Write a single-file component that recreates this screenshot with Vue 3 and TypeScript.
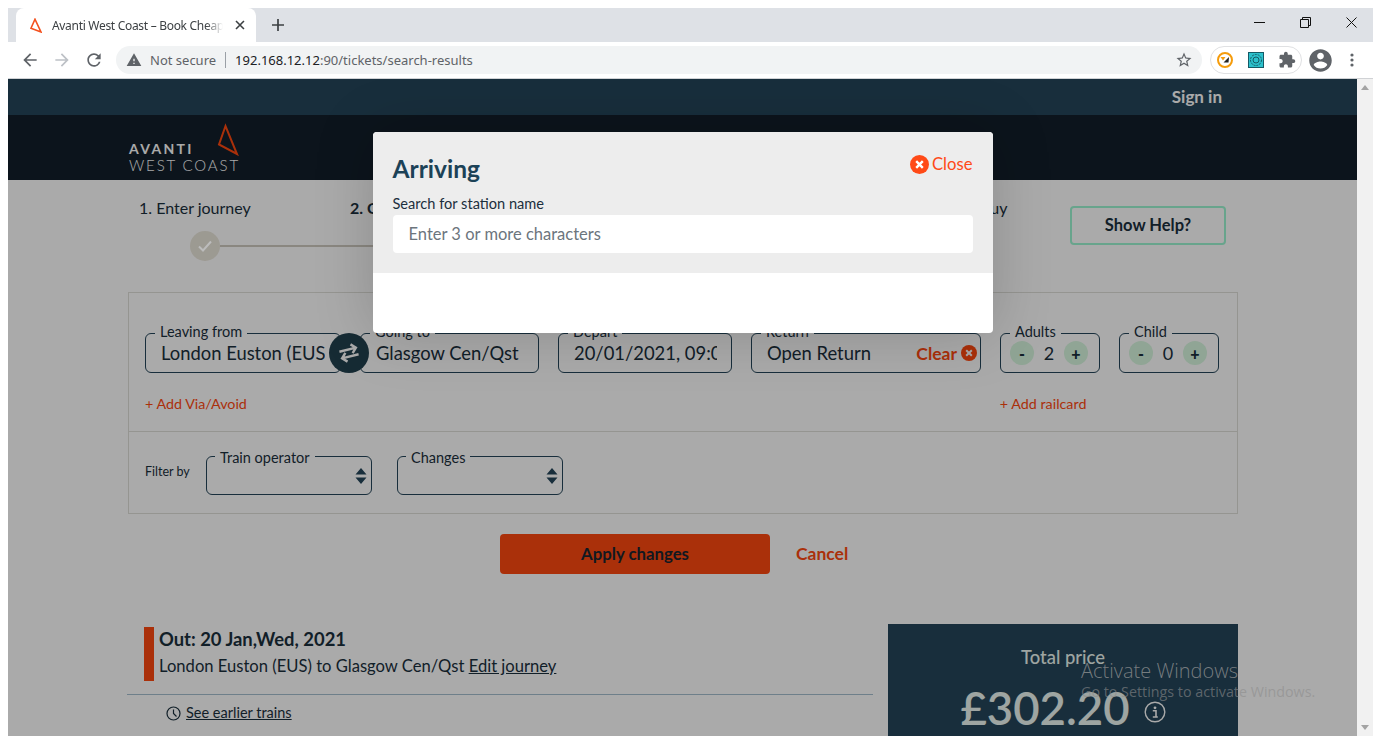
<template>
  <div class="screen">
    <!-- browser chrome -->
    <div class="tabstrip">
      <div class="tab">
        <svg class="favicon" width="12" height="15" viewBox="0 0 12 15"><path d="M5 1.2 1 10.2 11 14z" fill="none" stroke="#f4511e" stroke-width="1.6" /></svg>
        <span class="tab-title">Avanti West Coast – Book Cheap Train Tickets</span>
        <svg width="10" height="10" viewBox="0 0 10 10"><path d="M1 1l8 8M9 1L1 9" stroke="#3c4043" stroke-width="1.6" /></svg>
      </div>
      <svg class="newtab" width="12" height="12" viewBox="0 0 12 12"><path d="M6 0v12M0 6h12" stroke="#3c4043" stroke-width="1.7" /></svg>
      <div class="winctl">
        <svg width="11" height="11" viewBox="0 0 11 11"><path d="M0 5.5h11" stroke="#111" /></svg>
        <svg width="11" height="11" viewBox="0 0 11 11"><path d="M.5 2.5h8v8h-8zM2.5 2.5v-2h8v8h-2" fill="none" stroke="#111" /></svg>
        <svg width="11" height="11" viewBox="0 0 11 11"><path d="M.5.5l10 10M10.500 .5l-10 10" stroke="#111" /></svg>
      </div>
    </div>
    <div class="toolbar">
      <svg class="nav" width="20" height="20" viewBox="0 0 24 24"><path fill="#5f6368" d="M20 11H7.83l5.59-5.59L12 4l-8 8 8 8 1.41-1.41L7.83 13H20v-2z" /></svg>
      <svg class="nav" width="20" height="20" viewBox="0 0 24 24"><path fill="#bdc1c6" d="M4 11h12.17l-5.59-5.59L12 4l8 8-8 8-1.41-1.41L16.170 13H4v-2z" /></svg>
      <svg class="nav" width="20" height="20" viewBox="0 0 24 24"><path fill="#5f6368" d="M17.65 6.35A7.958 7.958 0 0 0 12 4c-4.42 0-7.99 3.58-7.99 8s3.57 8 7.99 8c3.73 0 6.84-2.55 7.73-6h-2.08A5.99 5.99 0 0 1 12 18c-3.31 0-6-2.69-6-6s2.69-6 6-6c1.66 0 3.14.69 4.22 1.78L13 11h7V4l-2.35 2.350z" /></svg>
      <div class="omnibox">
        <svg width="16" height="16" viewBox="0 0 24 24"><path fill="#5f6368" d="M1 21h22L12 2 1 21zm12-3h-2v-2h2v2zm0-4h-2v-4h2v4z" /></svg>
        <span class="insecure">Not secure</span>
        <span class="url"><b>192.168.12.12</b>:90/tickets/search-results</span>
        <svg class="star" width="18" height="18" viewBox="0 0 24 24"><path fill="#5f6368" d="M22 9.240l-7.190-.62L12 2 9.190 8.630 2 9.240l5.460 4.730L5.820 21 12 17.270 18.180 21l-1.630-7.030L22 9.240zM12 15.400l-3.760 2.270 1-4.280-3.320-2.880 4.380-.38L12 6.100l1.710 4.040 4.380.38-3.320 2.880 1 4.280L12 15.400z" /></svg>
      </div>
      <div class="extensions">
        <svg width="16" height="16" viewBox="0 0 16 16"><circle cx="8" cy="8" r="7" fill="#fff" stroke="#f59c0c" stroke-width="2" /><path d="M3.500 5h5L6 8.500z" fill="#f59c0c" /><path d="M12 5 6.500 10.500h5z" fill="#222" /></svg>
        <svg width="16" height="16" viewBox="0 0 16 16"><rect x=".5" y=".5" width="15" height="15" fill="#2cc1cc" stroke="#155a66" /><circle cx="8" cy="8" r="5.500" fill="none" stroke="#155a66" stroke-dasharray="2 1" /><circle cx="8" cy="8" r="3" fill="none" stroke="#155a66" /></svg>
        <svg width="18" height="18" viewBox="0 0 24 24"><path fill="#5f6368" d="M20.500 11H19V7c0-1.100-.9-2-2-2h-4V3.500C13 2.120 11.880 1 10.500 1S8 2.120 8 3.500V5H4c-1.100 0-1.990.9-1.990 2v3.800H3.500c1.490 0 2.700 1.210 2.700 2.700s-1.210 2.700-2.700 2.700H2V20c0 1.100.9 2 2 2h3.800v-1.500c0-1.490 1.210-2.700 2.700-2.700 1.490 0 2.700 1.210 2.700 2.700V22H17c1.100 0 2-.9 2-2v-4h1.500c1.380 0 2.500-1.120 2.500-2.500S21.880 11 20.500 11z" /></svg>
      </div>
      <svg class="avatar" width="27" height="27" viewBox="0 0 24 24"><path fill="#5f6368" d="M12 2C6.480 2 2 6.480 2 12s4.480 10 10 10 10-4.480 10-10S17.520 2 12 2zm0 3c1.660 0 3 1.340 3 3s-1.340 3-3 3-3-1.340-3-3 1.340-3 3-3zm0 14.200c-2.500 0-4.710-1.280-6-3.220.03-1.990 4-3.080 6-3.080 1.990 0 5.970 1.090 6 3.080-1.290 1.940-3.500 3.220-6 3.220z" /></svg>
      <svg class="dots" width="4" height="14" viewBox="0 0 4 14"><circle cx="2" cy="2" r="1.600" fill="#5f6368" /><circle cx="2" cy="7" r="1.600" fill="#5f6368" /><circle cx="2" cy="12" r="1.600" fill="#5f6368" /></svg>
    </div>

    <div class="viewport">
      <div class="page">
        <div class="topbar"><span>Sign in</span></div>
        <header class="brand">
          <div class="logo">
            <svg class="logo-mark" width="24" height="35" viewBox="0 0 24 35"><path d="M9.500 3 3 21.500 21 31z" fill="none" stroke="#ff4910" stroke-width="2" /></svg>
            <span class="logo-a">AVANTI</span>
            <span class="logo-b">WEST COAST</span>
          </div>
        </header>

        <main class="main">
          <div class="steps-row">
            <div class="steps">
              <div class="step-labels">
                <span v-for="s in steps" :key="s.label" :class="{ current: s.current }">{{ s.label }}</span>
              </div>
              <div class="track">
                <span class="dot">
                  <svg width="16" height="14" viewBox="0 0 16 14"><path d="M2 7.500 6 11.500 14 2.500" fill="none" stroke="#bcbcbc" stroke-width="2" /></svg>
                </span>
                <span class="line"></span>
              </div>
            </div>
            <button type="button" class="help">Show Help?</button>
          </div>

          <section class="panel">
            <div class="journey">
              <div class="fields">
                <div class="field">
                  <label>Leaving from</label>
                  <div class="value leaving">London Euston (EUS)</div>
                  <button type="button" class="swap" aria-label="Swap">
                    <svg width="26" height="22" viewBox="0 0 26 22"><g transform="rotate(-14 13 11)" fill="none" stroke="#fff" stroke-width="2.400"><path d="M4 7.500h17M16.500 3l4.500 4.500-4.500 4.500" /><path d="M22 14.500H5M9.500 10 5 14.500 9.500 19" /></g></svg>
                  </button>
                </div>
                <div class="field">
                  <label>Going to</label>
                  <div class="value">Glasgow Cen/Qst</div>
                </div>
                <div class="field">
                  <label>Depart</label>
                  <div class="value depart">20/01/2021, 09:00</div>
                </div>
                <div class="field">
                  <label>Return</label>
                  <div class="value">Open Return</div>
                  <span class="clear">Clear
                    <svg width="16" height="16" viewBox="0 0 16 16"><circle cx="8" cy="8" r="8" fill="#ff4910" /><path d="M5.200 5.200l5.600 5.600M10.800 5.200l-5.600 5.600" stroke="#fff" stroke-width="2" /></svg>
                  </span>
                </div>
                <div v-for="c in counters" :key="c.label" class="field counter">
                  <label>{{ c.label }}</label>
                  <span class="round">-</span>
                  <span class="count">{{ c.value }}</span>
                  <span class="round">+</span>
                </div>
              </div>
              <div class="links">
                <a>+ Add Via/Avoid</a>
                <a>+ Add railcard</a>
              </div>
            </div>
            <div class="filters">
              <span class="filter-by">Filter by</span>
              <div v-for="f in filters" :key="f" class="field select">
                <label>{{ f }}</label>
                <svg width="12" height="16" viewBox="0 0 12 16"><path d="M6 0l5.500 6.500H.5zM6 16l5.500-6.500H.5z" fill="#25465a" /></svg>
              </div>
            </div>
          </section>

          <div class="actions">
            <button type="button" class="apply">Apply changes</button>
            <a class="cancel">Cancel</a>
          </div>

          <div class="results">
            <div class="journey-list">
              <div class="out">
                <span class="out-bar"></span>
                <div>
                  <h2>Out: 20 Jan,Wed, 2021</h2>
                  <p>London Euston (EUS) to Glasgow Cen/Qst <u>Edit journey</u></p>
                </div>
              </div>
              <div class="earlier">
                <svg width="15" height="15" viewBox="0 0 15 15"><circle cx="7.500" cy="7.500" r="6.500" fill="none" stroke="#1a2f3d" stroke-width="1.200" /><path d="M7.500 3.500v4l3 3" fill="none" stroke="#1a2f3d" stroke-width="1.200" /></svg>
                <u>See earlier trains</u>
              </div>
            </div>
            <aside class="price">
              <div class="price-label">Total price</div>
              <div class="price-row">
                <span class="amount">£302.20</span>
                <svg width="22" height="22" viewBox="0 0 22 22"><circle cx="11" cy="11" r="9.800" fill="none" stroke="#fff" stroke-width="1.400" /><circle cx="11" cy="6.800" r="1.400" fill="#fff" /><path d="M8.800 9.800H12v6M8.800 16h5" fill="none" stroke="#fff" stroke-width="1.600" /></svg>
              </div>
            </aside>
          </div>
        </main>

        <div class="backdrop">
          <div class="modal">
            <div class="modal-head">
              <div class="modal-title">
                <h1>Arriving</h1>
                <a class="close">
                  <svg width="19" height="19" viewBox="0 0 19 19"><circle cx="9.500" cy="9.500" r="9.500" fill="#ff4a17" /><path d="M6.200 6.200l6.600 6.600M12.800 6.200l-6.600 6.600" stroke="#fff" stroke-width="2.400" /></svg>
                  Close
                </a>
              </div>
              <label class="search-label">Search for station name</label>
              <input class="search" type="text" placeholder="Enter 3 or more characters" />
            </div>
            <div class="modal-body"></div>
          </div>
        </div>

        <div class="watermark">
          <div class="wm-title">Activate Windows</div>
          <div class="wm-sub">Go to Settings to activate Windows.</div>
        </div>
      </div>

      <div class="scrollbar">
        <span class="arrow up"></span>
        <span class="arrow down"></span>
      </div>
    </div>
  </div>
</template>

<script setup lang="ts">
const steps = [
  { label: '1. Enter journey', current: false },
  { label: '2. Choose ticket', current: true },
  { label: '3. Seats', current: false },
  { label: '4. Buy', current: false }
]
const counters = [
  { label: 'Adults', value: 2 },
  { label: 'Child', value: 0 }
]
const filters = ['Train operator', 'Changes']
</script>

<style>
html,
body {
  margin: 0;
  background: #fff;
}
</style>

<style scoped>
.screen {
  box-sizing: border-box;
  width: 1382px;
  height: 744px;
  padding: 8px 9px 8px 8px;
  display: flex;
  flex-direction: column;
  overflow: hidden;
  font-family: Lato, sans-serif;
  color: #1a2f3d;
}

/* chrome */
.tabstrip {
  height: 34px;
  flex: none;
  background: #dee1e6;
  display: flex;
  align-items: center;
  padding-left: 8px;
  font-family: 'Noto Sans', sans-serif;
}
.tab {
  width: 240px;
  height: 34px;
  box-sizing: border-box;
  background: #fff;
  border-radius: 8px 8px 0 0;
  display: flex;
  align-items: center;
  padding: 0 11px 0 14px;
}
.tab-title {
  width: 172px;
  margin: 0 12px 0 10px;
  font-size: 12px;
  letter-spacing: -0.3px;
  color: #3c4043;
  white-space: nowrap;
  overflow: hidden;
  -webkit-mask-image: linear-gradient(90deg, #000 90%, transparent);
  mask-image: linear-gradient(90deg, #000 90%, transparent);
}
.newtab {
  margin-left: 16px;
}
.winctl {
  margin-left: auto;
  display: flex;
  gap: 35px;
  padding-right: 16px;
  margin-top: -6px;
}
.toolbar {
  height: 36px;
  flex: none;
  background: #fff;
  border-bottom: 1px solid #d0d2d5;
  display: flex;
  align-items: center;
  padding-left: 12px;
  font-family: 'Noto Sans', sans-serif;
}
.nav {
  margin-right: 12px;
}
.omnibox {
  width: 1086px;
  height: 28px;
  box-sizing: border-box;
  background: #f1f3f4;
  border-radius: 14px;
  display: flex;
  align-items: center;
  padding: 0 9px 0 10px;
  font-size: 13px;
}
.insecure {
  margin-left: 8px;
  padding-right: 9px;
  color: #5f6368;
  border-right: 1px solid #9aa0a6;
  line-height: 16px;
}
.url {
  margin-left: 9px;
  color: #5f6368;
}
.url b {
  font-weight: 400;
  color: #202124;
}
.star {
  margin-left: auto;
}
.extensions {
  width: 92px;
  height: 28px;
  box-sizing: border-box;
  margin-left: 8px;
  border: 1px solid #e0e1e3;
  border-radius: 14px;
  display: flex;
  align-items: center;
  justify-content: space-between;
  padding: 0 5px 0 6px;
}
.avatar {
  margin-left: 5px;
}
.dots {
  margin-left: 16px;
}

.viewport {
  flex: 1;
  min-height: 0;
  display: flex;
}
.page {
  position: relative;
  flex: 1;
  min-width: 0;
  overflow: hidden;
  background: #fff;
}
.scrollbar {
  width: 16px;
  flex: none;
  background: #f1f1f1;
  display: flex;
  flex-direction: column;
  justify-content: space-between;
  align-items: center;
  padding: 6px 0;
  box-sizing: border-box;
}
.arrow {
  width: 0;
  height: 0;
  border-left: 4px solid transparent;
  border-right: 4px solid transparent;
}
.arrow.up {
  border-bottom: 5px solid #a3a3a3;
}
.arrow.down {
  border-top: 5px solid #a3a3a3;
}

/* site */
.topbar {
  height: 36px;
  background: #25465a;
  display: flex;
  align-items: center;
  justify-content: flex-end;
  padding: 0 135px 2px 0;
  box-sizing: border-box;
  font-size: 17px;
  font-weight: 700;
  color: #fff;
}
.brand {
  height: 65px;
  background: #121e2a;
  padding-left: 121px;
  display: flex;
  align-items: flex-end;
}
.logo {
  position: relative;
  display: flex;
  flex-direction: column;
  color: #fff;
  padding-bottom: 7px;
}
.logo-mark {
  position: absolute;
  left: 87px;
  top: -18px;
}
.logo-a {
  font-size: 14px;
  font-weight: 700;
  letter-spacing: 2.300px;
  line-height: 16px;
}
.logo-b {
  font-size: 15px;
  font-weight: 300;
  letter-spacing: 1.850px;
  line-height: 16px;
}
.main {
  padding: 0 119px 0 120px;
}
.steps-row {
  display: flex;
  height: 112px;
}
.steps {
  padding: 18px 0 0 11px;
}
.step-labels {
  display: grid;
  grid-template-columns: 211px 250px 363px auto;
  font-size: 16px;
  line-height: 20px;
  white-space: nowrap;
}
.step-labels .current {
  font-weight: 700;
}
.track {
  display: flex;
  align-items: center;
  padding-left: 51px;
  margin-top: 13px;
}
.dot {
  width: 30px;
  height: 30px;
  border-radius: 50%;
  background: #ebe7dc;
  display: flex;
  align-items: center;
  justify-content: center;
}
.dot svg {
  position: relative;
  z-index: 3;
}
.line {
  width: 400px;
  height: 2px;
  background: #cfcbc0;
}
.help {
  box-sizing: border-box;
  width: 156px;
  height: 39px;
  margin: 26px 12px 0 auto;
  padding: 0 0 2px;
  background: #fff;
  border: 2px solid #9df7d2;
  border-radius: 4px;
  font: 700 16.500px Lato, sans-serif;
  color: #1a2f3d;
}
.panel {
  box-sizing: border-box;
  height: 222px;
  border: 1px solid #e0e0da;
}
.journey {
  box-sizing: border-box;
  height: 139px;
  padding: 40px 16px 0;
  border-bottom: 1px solid #e0e0da;
}
.fields {
  display: grid;
  grid-template-columns: 196px 179px 174px 230px 100px 100px;
  gap: 19px;
}
.field {
  position: relative;
  box-sizing: border-box;
  height: 40px;
  border: 1px solid #25465a;
  border-radius: 6px;
  display: flex;
  align-items: center;
}
.field label {
  position: absolute;
  left: 9px;
  top: -11px;
  padding: 0 5px;
  background: #fff;
  font-size: 14.500px;
  line-height: 18px;
}
.value {
  font-size: 18.400px;
  padding-left: 15px;
  overflow: hidden;
  white-space: nowrap;
  flex: none;
}
.value.leaving {
  width: 164px;
}
.value.depart {
  width: 143px;
}
.swap {
  position: absolute;
  right: -29px;
  top: -1px;
  width: 40px;
  height: 40px;
  padding: 0;
  border: 0;
  border-radius: 50%;
  background: #22414f;
  display: flex;
  align-items: center;
  justify-content: center;
  z-index: 1;
}
.clear {
  margin-left: auto;
  padding-right: 3px;
  display: flex;
  align-items: center;
  gap: 4px;
  font-size: 17.500px;
  font-weight: 700;
  color: #ff4910;
}
.counter {
  justify-content: center;
  gap: 6px;
  padding-right: 2px;
}
.count {
  width: 18px;
  text-align: center;
  font-size: 18px;
}
.round {
  width: 24px;
  height: 24px;
  border-radius: 50%;
  background: #d8f8e0;
  display: flex;
  align-items: center;
  justify-content: center;
  font-size: 16px;
  font-weight: 900;
}
.links {
  display: flex;
  margin-top: 22px;
  font-size: 14.300px;
  line-height: 18px;
  color: #ff4910;
}
.links a:last-child {
  margin-left: 753px;
}
.filters {
  display: flex;
  align-items: center;
  padding: 24px 16px 0;
}
.filter-by {
  width: 61px;
  margin-top: -9px;
  font-size: 12.500px;
}
.select {
  width: 166px;
  height: 39px;
  margin-right: 25px;
  justify-content: flex-end;
  padding-right: 4px;
}
.select label {
  top: -8px;
  left: 8px;
}
.actions {
  display: flex;
  align-items: center;
  margin-top: 20px;
  padding-left: 372px;
}
.apply {
  width: 270px;
  height: 40px;
  padding: 0 0 2px;
  border: 0;
  border-radius: 4px;
  background: #ff4910;
  font: 700 16.800px Lato, sans-serif;
  color: #1a2530;
}
.cancel {
  margin: -2px 0 0 26px;
  font-size: 17.500px;
  font-weight: 700;
  color: #ff4910;
}
.results {
  display: flex;
  gap: 15px;
  margin: 50px 0 0 -1px;
}
.journey-list {
  width: 746px;
  flex: none;
  padding-top: 3px;
}
.out {
  display: flex;
  gap: 5px;
  padding: 0 0 13px 17px;
  border-bottom: 1px solid #a5bfd0;
}
.out-bar {
  width: 10px;
  height: 54px;
  background: #ff4910;
}
.out h2 {
  margin: 0;
  font-size: 18.400px;
  font-weight: 700;
  line-height: 24px;
}
.out p {
  margin: 4px 0 0;
  font-size: 16.600px;
  line-height: 22px;
}
.earlier {
  display: flex;
  align-items: center;
  gap: 5px;
  padding: 8px 0 0 39px;
  font-size: 14.500px;
  line-height: 20px;
}
.price {
  width: 350px;
  height: 130px;
  background: #25465a;
  color: #eef8f3;
  text-align: center;
  padding-top: 23px;
  box-sizing: border-box;
}
.price-label {
  font-size: 18.400px;
  font-weight: 500;
  line-height: 20px;
}
.price-row {
  display: flex;
  align-items: center;
  justify-content: center;
  gap: 14px;
  margin-top: 12px;
}
.amount {
  font-size: 45.500px;
  font-weight: 600;
  line-height: 58px;
}
.price-row svg {
  margin-top: 8px;
}

/* modal */
.backdrop {
  position: absolute;
  inset: 0;
  z-index: 2;
  background: rgba(0, 0, 0, 0.333);
  display: flex;
  justify-content: center;
  align-items: flex-start;
  padding-top: 53px;
}
.modal {
  width: 620px;
  height: 201px;
  border-radius: 4px;
  overflow: hidden;
  background: #fff;
  box-shadow: 0 0 60px rgba(0, 0, 0, 0.18);
}
.modal-head {
  box-sizing: border-box;
  height: 141px;
  background: #ededed;
  padding: 20px 20px 0;
}
.modal-title {
  display: flex;
  justify-content: space-between;
  align-items: flex-start;
}
.modal-title h1 {
  margin: 0;
  font-size: 24.500px;
  font-weight: 700;
  line-height: 34px;
  color: #1c4257;
}
.close {
  display: flex;
  align-items: center;
  gap: 3px;
  font-size: 16.700px;
  line-height: 24px;
  color: #ff4a17;
}
.search-label {
  display: block;
  margin-top: 8px;
  font-size: 14.600px;
  line-height: 19px;
  color: #1c2f3d;
}
.search {
  display: block;
  box-sizing: border-box;
  width: 100%;
  height: 38px;
  margin-top: 2px;
  padding: 0 16px;
  border: 0;
  border-radius: 4px;
  background: #fff;
  font: 16.500px Lato, sans-serif;
}
.search::placeholder {
  color: #6c757d;
  opacity: 1;
}

.watermark {
  position: absolute;
  z-index: 3;
  left: 1073px;
  top: 578px;
  font-family: 'Open Sans', sans-serif;
  white-space: nowrap;
  pointer-events: none;
}
.wm-title {
  font-size: 20px;
  line-height: 27px;
  color: rgba(150, 150, 150, 0.75);
  font-weight: 300;
}
.wm-sub {
  font-size: 14.300px;
  line-height: 20px;
  margin-top: -2px;
  color: rgba(140, 140, 140, 0.6);
}
</style>
